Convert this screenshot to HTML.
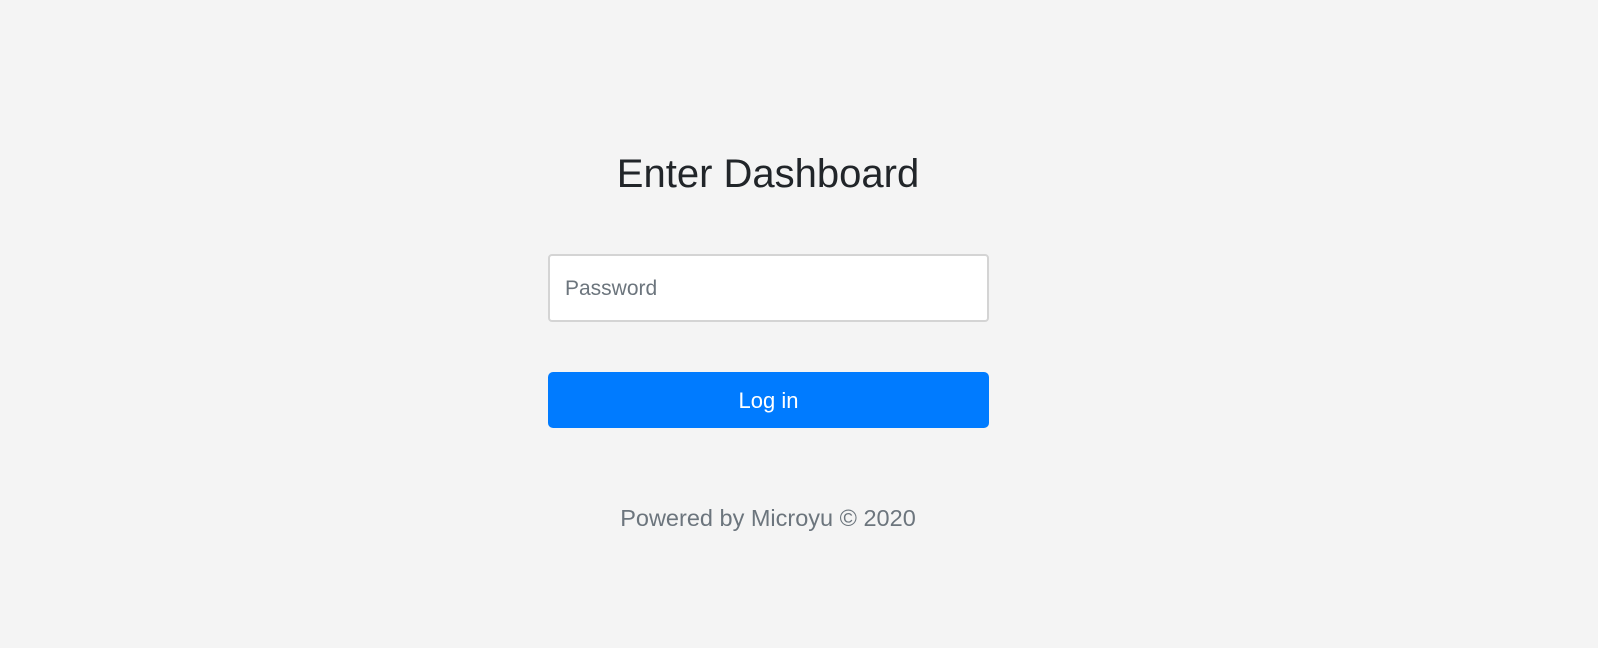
<!DOCTYPE html>
<html><head><meta charset="utf-8"><style>
html,body{margin:0;padding:0;}
body{width:1598px;height:648px;background:#f4f4f4;font-family:"Liberation Sans",sans-serif;position:relative;overflow:hidden;}
h1{position:absolute;left:368px;width:800px;top:149px;margin:0;text-align:center;font-weight:400;font-size:40px;line-height:50px;color:#212529;}
.inp{position:absolute;left:548px;top:254px;width:437px;height:64px;background:#fff;border:2px solid #d4d4d4;border-radius:4px;}
.inp span{position:absolute;left:15px;top:0;line-height:66px;font-size:21px;color:#6c757d;}
.btn{position:absolute;left:548px;top:372px;width:441px;height:56px;background:#007bff;border-radius:5px;color:#fff;text-align:center;line-height:58px;font-size:22px;}
.ft{position:absolute;left:368px;width:800px;top:503px;text-align:center;font-size:23.5px;line-height:30px;color:#6c757d;}
</style></head><body>
<h1>Enter Dashboard</h1>
<div class="inp"><span>Password</span></div>
<div class="btn">Log in</div>
<div class="ft">Powered by Microyu © 2020</div>
</body></html>
